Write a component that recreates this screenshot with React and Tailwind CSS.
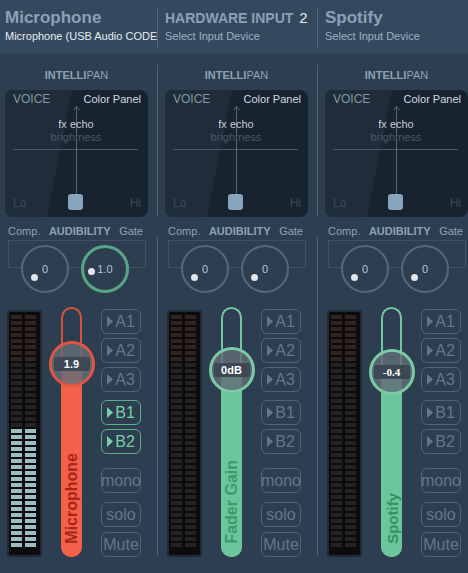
import React from "react";

const strips = [
  {
    title: "Microphone",
    sub: "Microphone (USB Audio CODE",
    bright: true,
    gate: "1.0",
    lit: 20,
    b: true,
    label: "1.9",
    name: "Microphone",
    theme: {
      outline: "border-[#d9513f]",
      fill: "bg-[#f4614a]",
      ring: "border-[#e0573f]",
      text: "text-[#a82619] text-[16px]",
      thumb: "top-[32px]",
      fillTop: "top-[55px]",
      labelFont: "font-['Liberation_Sans',sans-serif]",
    },
  },
  {
    title: "HARDWARE INPUT",
    num: "2",
    sub: "Select Input Device",
    gate: "0",
    lit: 0,
    label: "0dB",
    name: "Fader Gain",
    theme: {
      outline: "border-[#72c7a0]",
      fill: "bg-[#6cc69c]",
      ring: "border-[#7ccaa5]",
      text: "text-[#3a9c6d] text-[16px]",
      thumb: "top-[38px]",
      fillTop: "top-[61px]",
      labelFont: "font-['Liberation_Sans',sans-serif]",
    },
  },
  {
    title: "Spotify",
    sub: "Select Input Device",
    gate: "0",
    lit: 0,
    label: "-0.4",
    name: "Spotify",
    theme: {
      outline: "border-[#72c7a0]",
      fill: "bg-[#6cc69c]",
      ring: "border-[#7ccaa5]",
      text: "text-[#2f9462] text-[15px]",
      thumb: "top-[40px]",
      fillTop: "top-[63px]",
      labelFont: "font-['Liberation_Serif',serif]",
    },
  },
];

const SEGMENTS = 39;

function Meter({ lit }) {
  const rows = [];
  for (let i = 0; i < SEGMENTS; i++) {
    const on = i >= SEGMENTS - lit;
    const cls = on ? "bg-[#9cbec3]" : i < 8 ? "bg-[#33231e]" : "bg-[#232323]";
    rows.push(
      <div key={i} className="flex gap-[3px]">
        <div className={`w-[11px] h-[4px] ${cls}`} />
        <div className={`w-[11px] h-[4px] ${cls}`} />
      </div>
    );
  }
  return (
    <div className="mt-[3px] ml-[2px] w-[35px] h-[247px] rounded-[3px] bg-[#1e2b36] p-[2px]">
      <div className="w-full h-full bg-[#0c0c0c] rounded-[2px] pt-[3px] pl-[2px] flex flex-col gap-[2px]">
        {rows}
      </div>
    </div>
  );
}

function Knob({ value, active }) {
  return (
    <div
      className={`relative w-[48px] h-[48px] rounded-full bg-[#2d3e50] flex items-center justify-center ${
        active ? "border-[3px] border-[#58a585]" : "border-[2.5px] border-[#55677a]"
      }`}
    >
      <span className="text-[11px] text-[#b7c3ce] leading-none">{value}</span>
      <span
        className={`absolute w-[7px] h-[7px] rounded-full bg-[#e3e6ee] ${
          active ? "left-[4px] top-[20px]" : "left-[8px] top-[27px]"
        }`}
      />
    </div>
  );
}

function Fader({ s }) {
  const t = s.theme;
  return (
    <div className={`relative ml-[19px] w-[21px] h-[250px] rounded-full border-2 ${t.outline}`}>
      <div className={`absolute left-[-2px] right-[-2px] bottom-[-2px] ${t.fillTop} ${t.fill} rounded-b-[12px]`} />
      <div
        className={`absolute ${t.thumb} left-[-14.5px] w-[46px] h-[46px] rounded-full border-[3px] ${t.ring} bg-[rgba(98,108,120,0.82)] flex items-center justify-center`}
      >
        <div
          className={`w-[36px] h-[14px] rounded-[2px] bg-[#3c4856] flex items-center justify-center text-white font-bold text-[11px] leading-none ${t.labelFont}`}
        >
          {s.label}
        </div>
      </div>
      <div
        className={`absolute bottom-[11px] left-1/2 -translate-x-1/2 [writing-mode:vertical-rl] rotate-180 font-bold leading-none whitespace-nowrap ${t.text}`}
      >
        {s.name}
      </div>
    </div>
  );
}

function RouteBtn({ label, on, tri, mt }) {
  return (
    <div
      className={`${mt} h-[25px] w-[40px] rounded-[6px] border-[1.5px] flex items-center justify-center gap-[2px] font-['Liberation_Sans_Narrow','Liberation_Sans',sans-serif] text-[16px] leading-none ${
        on ? "border-[#5cb088] text-[#78cfa4]" : "border-[#506376] text-[#64778a]"
      }`}
    >
      {tri && (
        <svg width="6" height="11" viewBox="0 0 6 11">
          <polygon points="0,0 6,5.5 0,11" fill="currentColor" />
        </svg>
      )}
      <span>{label}</span>
    </div>
  );
}

function Pad() {
  return (
    <div className="relative mt-[8px] w-[143px] h-[127px] rounded-[8px] overflow-hidden bg-[#17232e]">
      <svg className="absolute inset-0" width="143" height="127">
        <polygon points="0,0 67,0 42,127 0,127" fill="#1f2d3a" />
      </svg>
      <span className="absolute left-[8px] top-[2px] text-[12px] leading-[14px] text-[#8797a6]">VOICE</span>
      <span className="absolute right-[7px] top-[3px] text-[11px] leading-[13px] text-[#d5dbe1]">Color Panel</span>
      <div className="absolute left-[8px] top-[59px] w-[125px] h-px bg-[#4a5968]" />
      <div className="absolute left-[71px] top-[17px] w-px h-[90px] bg-[#5a6874]" />
      <svg className="absolute left-[68px] top-[16px]" width="7" height="5" viewBox="0 0 7 5">
        <polyline points="0.5,4.5 3.5,0.5 6.5,4.5" fill="none" stroke="#5a6874" strokeWidth="1" />
      </svg>
      <span className="absolute left-0 w-[142px] top-[28px] text-center text-[11px] leading-[13px] text-[#c5ccd3]">
        fx echo
      </span>
      <span className="absolute left-0 w-[142px] top-[41px] text-center text-[11px] leading-[13px] text-[#4a5968]">
        brightness
      </span>
      <span className="absolute left-[8px] top-[106px] text-[12px] leading-[14px] text-[#3c4b58]">Lo</span>
      <span className="absolute right-[7px] top-[106px] text-[12px] leading-[14px] text-[#3c4b58]">Hi</span>
      <div className="absolute left-[63px] top-[104px] w-[15px] h-[16px] rounded-[3px] bg-[#89a5be]" />
    </div>
  );
}

function Header({ s }) {
  return (
    <div className="flex w-[160px] shrink-0">
      <div className="w-[157px] pl-[5px] pr-[2px] pt-[8px]">
        <div className="h-[20px] leading-[20px] whitespace-nowrap">
          {s.num ? (
            <span className="text-[14px] font-bold text-[#8aa1b8] font-['Liberation_Sans_Narrow','Liberation_Sans',sans-serif]">
              {s.title}
              <span className="ml-[6px] font-normal text-[15px] text-[#e1e7ed]">{s.num}</span>
            </span>
          ) : (
            <span className="text-[17px] font-bold text-[#8aa1b8]">{s.title}</span>
          )}
        </div>
        <div
          className={`mt-[1px] text-[11px] leading-[14px] whitespace-nowrap ${
            s.bright ? "text-[#e6ecf1]" : "text-[#9fb0c1]"
          }`}
        >
          {s.sub}
        </div>
      </div>
      <div className="mt-[8px] w-px h-[40px] bg-[#55687c]" />
    </div>
  );
}

function Strip({ s }) {
  return (
    <div className="flex w-[160px] shrink-0">
      <div className="w-[157px] pl-[5px] flex flex-col">
        <div className="mt-[16px] w-[143px] text-center text-[11px] leading-[13px] text-[#8fa2b4]">
          <span className="font-bold">INTELLI</span>PAN
        </div>
        <Pad />
        <div className="mt-[7px] w-[143px] pl-[3px] pr-[5px] flex justify-between items-baseline leading-[14px] text-[#8ea3b6]">
          <span className="text-[11px]">Comp.</span>
          <span className="text-[11px] font-bold">AUDIBILITY</span>
          <span className="text-[11px]">Gate</span>
        </div>
        <div className="relative h-[55px]">
          <div className="absolute left-[3px] top-[2px] w-[138px] h-[28px] border border-[#3e5061]" />
          <div className="relative flex gap-[12px] ml-[16px] mt-[7px]">
            <Knob value="0" />
            <Knob value={s.gate} active={s.gate !== "0"} />
          </div>
        </div>
        <div className="mt-[14px] flex items-start">
          <Meter lit={s.lit} />
          <Fader s={s} />
          <div className="ml-[19px] flex flex-col">
            <RouteBtn label="A1" tri mt="mt-[2px]" />
            <RouteBtn label="A2" tri mt="mt-[4px]" />
            <RouteBtn label="A3" tri mt="mt-[4px]" />
            <RouteBtn label="B1" tri on={s.b} mt="mt-[8px]" />
            <RouteBtn label="B2" tri on={s.b} mt="mt-[4px]" />
            <RouteBtn label="mono" mt="mt-[14px]" />
            <RouteBtn label="solo" mt="mt-[9px]" />
            <RouteBtn label="Mute" mt="mt-[5px]" />
          </div>
        </div>
      </div>
      <div className="flex flex-col">
        <div className="mt-[12px] w-px h-[151px] bg-[#4f6275]" />
        <div className="mt-[21px] w-px h-[319px] bg-[#4f6275]" />
      </div>
    </div>
  );
}

export default function App() {
  return (
    <div className="w-[468px] h-[573px] overflow-hidden bg-[#2d3e50] font-['Liberation_Sans',Arial,sans-serif]">
      <div className="flex h-[53px] bg-[#34495e]">
        {strips.map((s) => (
          <Header key={s.title} s={s} />
        ))}
      </div>
      <div className="flex">
        {strips.map((s) => (
          <Strip key={s.title} s={s} />
        ))}
      </div>
    </div>
  );
}
